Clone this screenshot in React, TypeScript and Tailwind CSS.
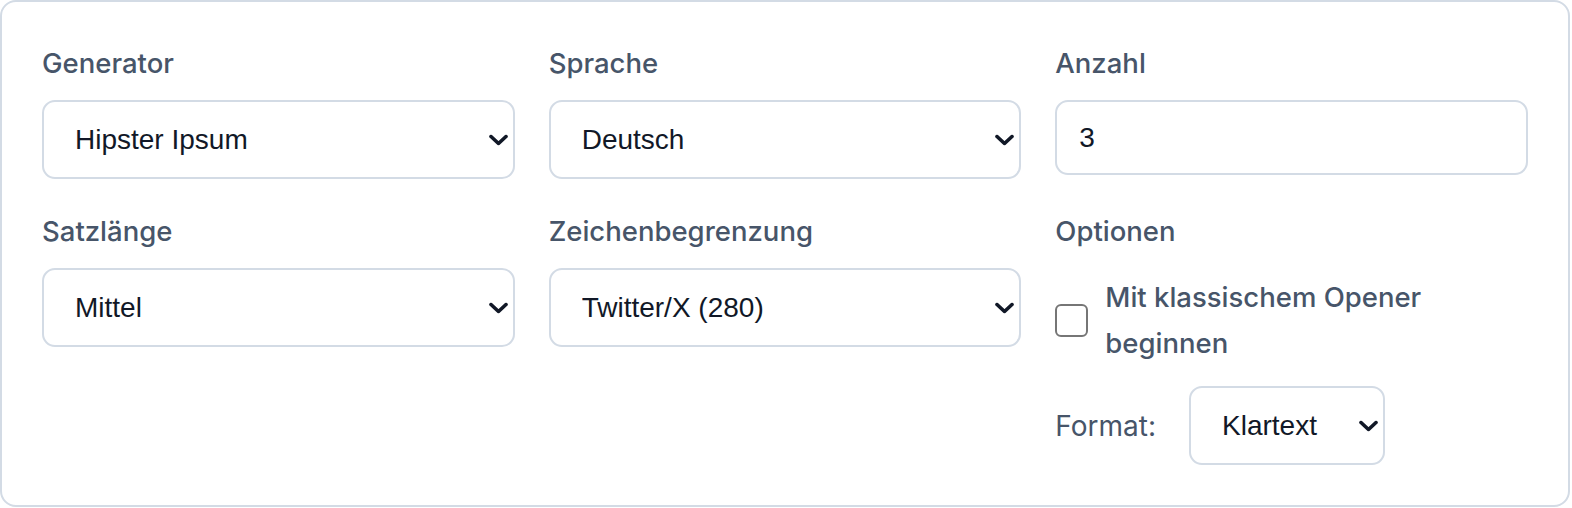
import { useState } from 'react';

const labelClass =
  "block text-[27.5px] leading-[39px] font-medium text-[#475569] mb-[17px] font-['Inter',sans-serif]";

const Chevron = () => (
  <svg
    width="19"
    height="11"
    viewBox="0 0 19 11"
    className="pointer-events-none absolute right-[7px] top-1/2 -translate-y-1/2"
  >
    <polyline
      points="2,2 9.5,9 17,2"
      fill="none"
      stroke="#111827"
      strokeWidth="3.6"
      strokeLinecap="round"
      strokeLinejoin="round"
    />
  </svg>
);

interface SelectProps {
  value: string;
  options: string[];
  onChange: (v: string) => void;
  className?: string;
}

const Select = ({ value, options, onChange, className = 'w-full' }: SelectProps) => (
  <div className={`relative ${className}`}>
    <select
      value={value}
      onChange={(e) => onChange(e.target.value)}
      className="appearance-none w-full h-[79px] bg-white border-2 border-[#d3dbe5] rounded-[13px] pl-[31px] pr-[40px] text-[28px] text-[#111827] font-['Liberation_Sans',Arial,sans-serif] outline-none"
    >
      {options.map((o) => (
        <option key={o}>{o}</option>
      ))}
    </select>
    <Chevron />
  </div>
);

export default function App() {
  const [generator, setGenerator] = useState('Hipster Ipsum');
  const [lang, setLang] = useState('Deutsch');
  const [count, setCount] = useState('3');
  const [length, setLength] = useState('Mittel');
  const [limit, setLimit] = useState('Twitter/X (280)');
  const [opener, setOpener] = useState(false);
  const [format, setFormat] = useState('Klartext');

  return (
    <div className="w-[1570px] h-[507px] bg-white border-2 border-[#d3dbe5] rounded-[16px] px-[40px] pt-[42px] pb-[40px]">
      <div className="grid grid-cols-3 gap-x-[34px] gap-y-[33px] items-start">
        <div>
          <label className={labelClass}>Generator</label>
          <Select
            value={generator}
            onChange={setGenerator}
            options={['Hipster Ipsum', 'Lorem Ipsum', 'Bacon Ipsum']}
          />
        </div>

        <div>
          <label className={labelClass}>Sprache</label>
          <Select value={lang} onChange={setLang} options={['Deutsch', 'English']} />
        </div>

        <div>
          <label className={labelClass}>Anzahl</label>
          <input
            type="number"
            value={count}
            onChange={(e) => setCount(e.target.value)}
            className="w-full h-[75px] bg-white border-2 border-[#d3dbe5] rounded-[13px] px-[22px] text-[28px] text-[#111827] font-['Liberation_Sans',Arial,sans-serif] outline-none [appearance:textfield] [&::-webkit-inner-spin-button]:appearance-none"
          />
        </div>

        <div>
          <label className={labelClass}>Satzlänge</label>
          <Select value={length} onChange={setLength} options={['Kurz', 'Mittel', 'Lang']} />
        </div>

        <div>
          <label className={labelClass}>Zeichenbegrenzung</label>
          <Select
            value={limit}
            onChange={setLimit}
            options={['Keine', 'Twitter/X (280)', 'SMS (160)']}
          />
        </div>

        <div>
          <label className={labelClass}>Optionen</label>
          <label className="mt-[24px] flex items-center gap-[17px] cursor-pointer">
            <input
              type="checkbox"
              checked={opener}
              onChange={(e) => setOpener(e.target.checked)}
              className="appearance-none shrink-0 w-[33px] h-[33px] bg-white border-2 border-[#767676] rounded-[6px] checked:bg-[#2563eb] checked:border-[#2563eb]"
            />
            <span className="max-w-[345px] text-[27.5px] leading-[45.5px] font-medium text-[#475569] font-['Inter',sans-serif]">
              Mit klassischem Opener beginnen
            </span>
          </label>
          <div className="mt-[20px] flex items-center gap-[33px]">
            <span className="text-[28px] text-[#475569] font-['Inter',sans-serif]">Format:</span>
            <Select
              value={format}
              onChange={setFormat}
              options={['Klartext', 'HTML', 'Markdown']}
              className="w-[196px]"
            />
          </div>
        </div>
      </div>
    </div>
  );
}
